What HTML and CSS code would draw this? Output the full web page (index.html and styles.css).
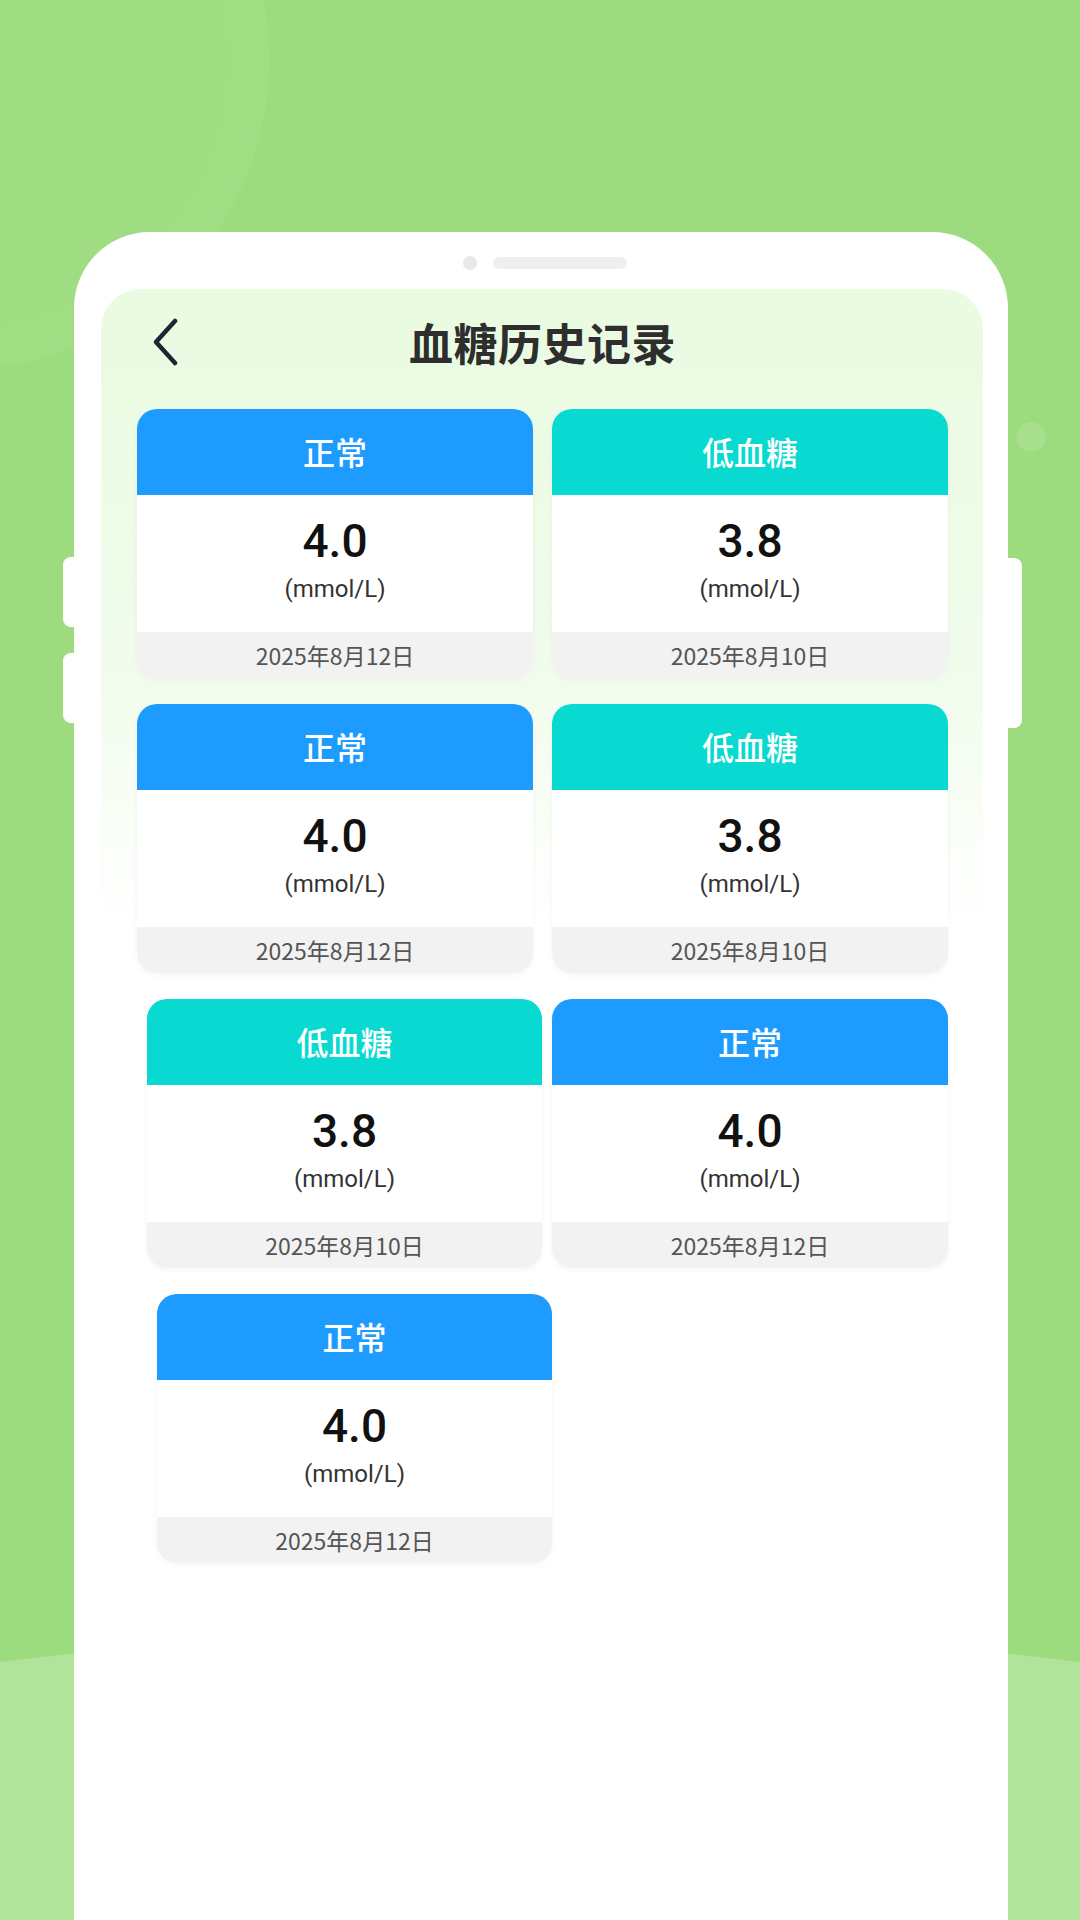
FILE: index.html
```html
<!DOCTYPE html>
<html lang="zh-CN">
<head>
    <meta charset="UTF-8">
    <meta name="viewport" content="width=device-width, initial-scale=1.0">
    <title>血糖历史记录</title>
    <link rel="stylesheet" href="styles.css">
</head>
<body>
    <div class="phone">
        <span class="side-btn left-1"></span>
        <span class="side-btn left-2"></span>
        <span class="side-btn right-1"></span>

        <div class="speaker">
            <i class="cam"></i>
            <i class="slot"></i>
        </div>

        <div class="screen">
            <header class="topbar">
                <a href="#" class="back">
                    <svg width="30" height="48" viewBox="0 0 30 48">
                        <polyline points="25,3 6,24 25,45" fill="none" stroke="#1d2730" stroke-width="4.5" stroke-linecap="round" stroke-linejoin="round"/>
                    </svg>
                </a>
                <h1>血糖历史记录</h1>
                <span></span>
            </header>

            <div class="record-grid">
                <div class="record-card">
                    <div class="record-head normal">正常</div>
                    <div class="record-body">
                        <p class="value">4.0</p>
                        <p class="unit">(mmol/L)</p>
                    </div>
                    <div class="record-date">2025年8月12日</div>
                </div>
                <div class="record-card">
                    <div class="record-head low">低血糖</div>
                    <div class="record-body">
                        <p class="value">3.8</p>
                        <p class="unit">(mmol/L)</p>
                    </div>
                    <div class="record-date">2025年8月10日</div>
                </div>

                <div class="record-card">
                    <div class="record-head normal">正常</div>
                    <div class="record-body">
                        <p class="value">4.0</p>
                        <p class="unit">(mmol/L)</p>
                    </div>
                    <div class="record-date">2025年8月12日</div>
                </div>
                <div class="record-card">
                    <div class="record-head low">低血糖</div>
                    <div class="record-body">
                        <p class="value">3.8</p>
                        <p class="unit">(mmol/L)</p>
                    </div>
                    <div class="record-date">2025年8月10日</div>
                </div>

                <div class="record-card shift-1">
                    <div class="record-head low">低血糖</div>
                    <div class="record-body">
                        <p class="value">3.8</p>
                        <p class="unit">(mmol/L)</p>
                    </div>
                    <div class="record-date">2025年8月10日</div>
                </div>
                <div class="record-card">
                    <div class="record-head normal">正常</div>
                    <div class="record-body">
                        <p class="value">4.0</p>
                        <p class="unit">(mmol/L)</p>
                    </div>
                    <div class="record-date">2025年8月12日</div>
                </div>

                <div class="record-card shift-2">
                    <div class="record-head normal">正常</div>
                    <div class="record-body">
                        <p class="value">4.0</p>
                        <p class="unit">(mmol/L)</p>
                    </div>
                    <div class="record-date">2025年8月12日</div>
                </div>
            </div>
        </div>
    </div>
</body>
</html>
```

FILE: styles.css
```css
html {
    overflow: hidden;
}
body {
    margin: 0;
    width: 1080px;
    height: 1920px;
    overflow: hidden;
    background-color: #9ddc7e;
    background-image:
        radial-gradient(ellipse 1000px 200px at 540px 1830px, #b1e39a 99.6%, rgba(177, 227, 154, 0) 100%),
        radial-gradient(circle 15px at 1031px 437px, rgba(255, 255, 255, 0.12) 95%, rgba(255, 255, 255, 0) 100%),
        radial-gradient(circle 310px at -40px 60px, rgba(255, 255, 255, 0.01) 40%, rgba(255, 255, 255, 0.045) 99.5%, rgba(255, 255, 255, 0) 100%);
    background-repeat: no-repeat;
    font-family: "Noto Sans CJK SC", "Noto Sans", sans-serif;
    display: flex;
    flex-direction: column;
    padding: 232px 0 0 74px;
    box-sizing: border-box;
}
.phone {
    position: relative;
    width: 934px;
    flex: 1;
    background: white;
    border-radius: 76px 76px 0 0;
    padding: 24px 25px 0 27px;
    box-sizing: border-box;
    display: flex;
    flex-direction: column;
}
.side-btn {
    position: absolute;
    background: white;
    width: 16px;
}
.left-1 {
    left: -11px;
    top: 325px;
    height: 70px;
    border-radius: 8px 0 0 8px;
}
.left-2 {
    left: -11px;
    top: 421px;
    height: 70px;
    border-radius: 8px 0 0 8px;
}
.right-1 {
    right: -14px;
    top: 326px;
    height: 170px;
    border-radius: 0 8px 8px 0;
}
.speaker {
    display: flex;
    justify-content: center;
    align-items: center;
    gap: 16px;
    height: 14px;
    margin-bottom: 19px;
    padding-left: 6px;
}
.cam {
    width: 14px;
    height: 14px;
    border-radius: 50%;
    background-color: #e9e9e9;
}
.slot {
    width: 134px;
    height: 12px;
    border-radius: 6px;
    background-color: #efefef;
}
.screen {
    flex: 1;
    border-radius: 40px 40px 0 0;
    background: linear-gradient(180deg, #e9fbe1 0px, #f1fcec 380px, #ffffff 640px);
    padding: 0 36px;
}
.topbar {
    display: grid;
    grid-template-columns: 1fr auto 1fr;
    align-items: center;
    height: 106px;
    margin: 0 -36px;
    padding-left: 49px;
}
.back {
    display: flex;
    width: 30px;
    height: 48px;
}
.topbar h1 {
    margin: 0;
    font-size: 44px;
    font-weight: 700;
    color: #2e2e2e;
    letter-spacing: 0.5px;
    transform: translateX(-24px);
}
.record-grid {
    display: grid;
    grid-template-columns: 396px 395px;
    column-gap: 19px;
    row-gap: 26px;
    margin-top: 14px;
}
.record-card {
    width: 396px;
    border-radius: 20px;
    background: white;
    overflow: hidden;
    box-shadow: 0 2px 6px rgba(0, 0, 0, 0.04);
    text-align: center;
}
.shift-1 {
    width: 395px;
    margin-left: 10px;
}
.shift-2 {
    width: 395px;
    margin-left: 20px;
}
.record-head {
    height: 86px;
    line-height: 84px;
    font-size: 32px;
    font-weight: 500;
    color: white;
}
.record-head.normal {
    background-color: #1e9bfe;
}
.record-head.low {
    background-color: #08dad1;
}
.record-body {
    padding: 19px 0 28px;
}
.record-body p {
    margin: 0;
}
.value {
    font-family: Roboto, "Noto Sans CJK SC", sans-serif;
    font-size: 46px;
    font-weight: 500;
    line-height: 54px;
    color: #111;
}
.unit {
    font-family: Roboto, "Noto Sans CJK SC", sans-serif;
    font-size: 24px;
    line-height: 30px;
    color: #333;
    margin-top: 6px !important;
}
.record-date {
    height: 46px;
    line-height: 46px;
    background-color: #f2f2f2;
    font-size: 23px;
    color: #555;
}
```
